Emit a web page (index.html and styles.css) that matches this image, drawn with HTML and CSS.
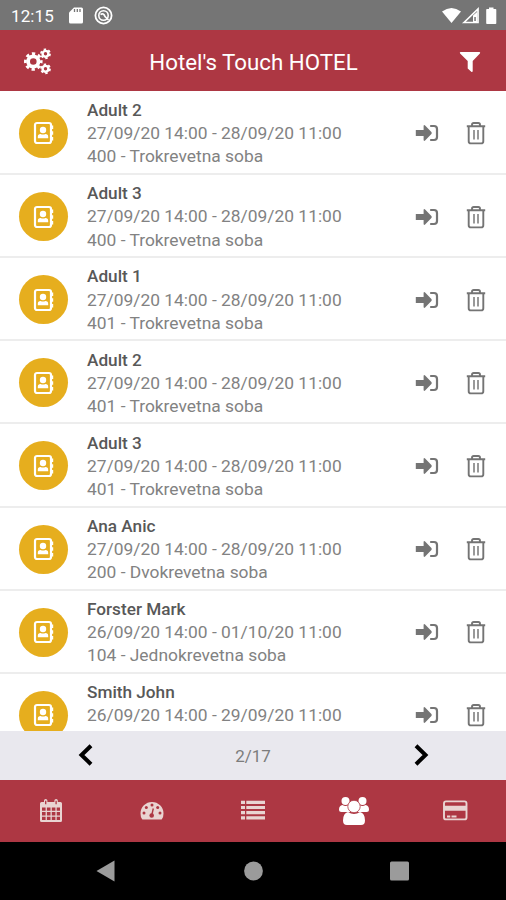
FILE: index.html
```html
<!DOCTYPE html>
<html lang="hr">

<head>
    <meta charset="UTF-8">
    <title>Hotel's Touch HOTEL</title>
    <link rel="stylesheet" href="styles.css">
</head>

<body>

    <!-- icons -->
    <svg class="sprite">
        <symbol id="book" viewBox="0 0 22 24">
            <rect x="2" y="2" width="16" height="20" rx="2" fill="none" stroke="#fff" stroke-width="2.2"/>
            <path d="M18 4.5h2.2v3.6H18zM18 10.2h2.2v3.6H18zM18 16h2.2v3.6H18z" fill="#fff"/>
            <circle cx="10" cy="9" r="3.2" fill="#fff"/>
            <path d="M4.8 17.300v-1.600q0-2.700 2.800-2.700 2.400 1.100 4.800 0 2.800 0 2.800 2.700v1.600z" fill="#fff"/>
        </symbol>
        <symbol id="checkin" viewBox="0 0 24 20">
            <path d="M.8 6.900h7.800V3.200q0-1.900 1.500-.7l6.300 6.600q.8.900 0 1.800l-6.300 6.600q-1.500 1.200-1.500-.7v-3.700H.8z" fill="#747474"/>
            <path d="M16 3h3q3 0 3 3v8q0 3-3 3h-3" fill="none" stroke="#747474" stroke-width="2.2" stroke-linecap="round"/>
        </symbol>
        <symbol id="trash" viewBox="0 0 20 24">
            <path d="M.8 5.300h18.400M6 5V3.700Q6 2 7.700 2h4.600Q14 2 14 3.700V5M2.700 5.500v14.700q0 2.200 2.200 2.200h10.200q2.200 0 2.200-2.200V5.500" fill="none" stroke="#747474" stroke-width="1.9"/>
            <path d="M8 9v9.500M12 9v9.500" stroke="#808080" stroke-width="1.600"/>
        </symbol>
    </svg>

    <div class="status">
        <span class="time">12:15</span>
        <svg class="sd" width="14" height="17" viewBox="0 0 14 17">
            <path d="M5 .5H12.500Q14 .5 14 2V15Q14 16.500 12.500 16.500H1.500Q0 16.500 0 15V5.500z" fill="#fff"/>
            <path d="M5.500 2v3M8.300 2v3M11 2v3" stroke="#757575" stroke-width="1.300"/>
        </svg>
        <svg width="19" height="19" viewBox="0 0 19 19" fill="none" stroke="#fff">
            <circle cx="9.500" cy="9.500" r="8.100" stroke-width="1.800"/>
            <circle cx="9.500" cy="9.500" r="4.700" stroke-width="1.600"/>
            <path d="M6.500 8.500q3-2 4.500 2l3.500 3.500" stroke-width="1.700"/>
        </svg>
        <svg class="signals" width="56" height="18" viewBox="0 0 56 18">
            <path d="M0 4.500Q9.500-2.500 19 4.500L9.500 16z" fill="#fff"/>
            <path d="M22 15.500L36 2v13.500z" fill="none" stroke="#fff" stroke-width="1.700"/>
            <path d="M31 8.500L35 5v10h-4z" fill="#fff"/>
            <path d="M32.300 10h1.500v4h-1.500z" fill="#757575"/>
            <path d="M45 2h2V.500h4.500V2h2q.8 0 .8.800v13.400q0 .8-.8.800h-8.500q-.8 0-.8-.8V2.800q0-.8.800-.8z" fill="#fff"/>
        </svg>
    </div>

    <div class="header">
        <svg width="28" height="28" viewBox="0 0 28 28" fill="none" stroke="#fff">
            <circle cx="9.300" cy="13.500" r="5.200" stroke-width="3.800"/>
            <circle cx="9.300" cy="13.500" r="7.900" stroke-width="2.800" stroke-dasharray="3.300 2.905" stroke-dashoffset="1.650"/>
            <circle cx="21.500" cy="5.800" r="2.900" stroke-width="2.400"/>
            <circle cx="21.500" cy="5.800" r="4.500" stroke-width="1.800" stroke-dasharray="2.400 2.312"/>
            <circle cx="21.500" cy="20.800" r="2.900" stroke-width="2.400"/>
            <circle cx="21.500" cy="20.800" r="4.500" stroke-width="1.800" stroke-dasharray="2.400 2.312"/>
        </svg>
        <h1>Hotel's Touch HOTEL</h1>
        <svg width="22" height="22" viewBox="0 0 22 22">
            <path d="M1.500 1h19q1.200.4.400 1.600L13.700 10v10.200q-.3 1.200-1.400.500l-3.600-3.300V10L1.100 2.600Q.3 1.400 1.500 1z" fill="#fff"/>
        </svg>
    </div>

    <div class="list" id="list"></div>

    <div class="pager">
        <svg width="16" height="24" viewBox="0 0 16 24"><path d="M14 1.800L4.500 11l9.500 9.200" fill="none" stroke="#000" stroke-width="4"/></svg>
        <span>2/17</span>
        <svg width="16" height="24" viewBox="0 0 16 24"><path d="M3 1.800l9.500 9.200L3 20.200" fill="none" stroke="#000" stroke-width="4"/></svg>
    </div>

    <div class="tabs">
        <!-- calendar -->
        <svg width="24" height="26" viewBox="0 0 24 26">
            <path d="M2.500 4H5V2.500Q5 1 6.700 1t1.700 1.500V4h7V2.500Q15.400 1 17.100 1t1.700 1.500V4h2.700q1.500 0 1.500 1.500v17q0 1.500-1.500 1.500h-19Q1 24 1 22.500v-17Q1 4 2.500 4z" fill="#e9d4d2"/>
            <path d="M6.700 2.800v3.500M17.100 2.800v3.500" stroke="#ad3743" stroke-width="1.300"/>
            <path d="M3 9.500h3.600v3.200H3zM7.900 9.500h3.600v3.200H7.900zM12.800 9.500h3.600v3.200h-3.600zM17.700 9.500h3.300v3.200h-3.300zM3 14h3.600v3.500H3zM7.900 14h3.600v3.500H7.900zM12.800 14h3.600v3.500h-3.600zM17.700 14h3.300v3.500h-3.300zM3 18.800h3.600V22H3zM7.900 18.800h3.600V22H7.900zM12.800 18.800h3.600V22h-3.600zM17.700 18.800h3.300V22h-3.300z" fill="#ad3743"/>
        </svg>
        <!-- dashboard -->
        <svg width="24" height="26" viewBox="0 0 24 26">
            <path d="M.5 15.500a11.500 11.500 0 0 1 23 0q0 3.300-1.500 5.500-.4.500-1 .5H3q-.6 0-1-.5Q.5 18.800.5 15.500z" fill="#e9d4d2"/>
            <g fill="#ad3743">
                <circle cx="4" cy="15" r="1.500"/><circle cx="6.300" cy="9.400" r="1.500"/><circle cx="12" cy="7" r="1.500"/>
                <circle cx="17.700" cy="9.400" r="1.500"/><circle cx="20" cy="15" r="1.500"/><circle cx="11.700" cy="17.500" r="2.300"/>
            </g>
            <path d="M11.700 17.500L13.300 10.500" stroke="#ad3743" stroke-width="1.400"/>
        </svg>
        <!-- list -->
        <svg width="24" height="26" viewBox="0 0 24 26">
            <path d="M0 2.700h4v3.200H0zM5.300 2.700H24v3.200H5.300zM0 7.900h4v3.200H0zM5.300 7.900H24v3.200H5.300zM0 13.100h4v3.200H0zM5.300 13.100H24v3.200H5.300zM0 18.200h4v3.200H0zM5.300 18.200H24v3.200H5.300z" fill="#e9d4d2"/>
        </svg>
        <!-- guests -->
        <svg width="30" height="30" viewBox="0 0 30 30" fill="#fff">
            <circle cx="6.500" cy="5" r="4"/>
            <circle cx="23.500" cy="5" r="4"/>
            <path d="M3.500 9q3 2 6 0 0 5 2.500 7H2.500Q0 16 0 13.500 0 9.500 3.500 9zM26.500 9q-3 2-6 0 0 5-2.500 7h9.500q2.500 0 2.500-2.500 0-4-3.500-4.500z"/>
            <path d="M9 16q6 4 12 0 5 1.300 5 8.500 0 4.500-4 4.500H8q-4 0-4-4.500Q4 17.300 9 16z"/>
            <circle cx="15" cy="10.500" r="6.200" stroke="#ad3743" stroke-width=".8"/>
        </svg>
        <!-- card -->
        <svg width="26" height="26" viewBox="0 0 26 26">
            <rect x="2" y="3.400" width="22.500" height="18" rx="2" fill="none" stroke="#e9d4d2" stroke-width="1.900"/>
            <path d="M2 7.700h22.500v5H2zM5 17.500h3.300v2H5zM9.500 17.500h5v2h-5z" fill="#e9d4d2"/>
        </svg>
    </div>

    <div class="navbar">
        <svg width="20" height="22" viewBox="0 0 20 22"><path d="M18.500.500v21L.5 11z" fill="#9b9b9b"/></svg>
        <svg width="20" height="20" viewBox="0 0 20 20"><circle cx="10.500" cy="10" r="9.400" fill="#9b9b9b"/></svg>
        <svg width="20" height="20" viewBox="0 0 20 20"><rect x="0" y=".5" width="19" height="19" rx="1.500" fill="#9b9b9b"/></svg>
    </div>

    <script src="script.js"></script>

</body>

</html>
```
FILE: styles.css
```css
body {
    margin: 0;
    width: 506px;
    height: 900px;
    display: flex;
    flex-direction: column;
    overflow: hidden;
    background-color: #fff;
    font-family: Roboto, sans-serif;
}

svg {
    display: block;
    flex: none;
}

.sprite {
    display: none;
}

.status {
    height: 30px;
    flex: none;
    display: flex;
    align-items: center;
    padding: 1px 8px 0 11px;
    box-sizing: border-box;
    background-color: #757575;
    color: #fff;
}

.time {
    width: 58px;
    font-size: 17px;
    letter-spacing: 0.1px;
}

.sd {
    margin-right: 11px;
}

.signals {
    margin-left: auto;
}

.header {
    height: 61px;
    flex: none;
    display: flex;
    align-items: center;
    justify-content: space-between;
    padding: 2px 25px 0 24px;
    box-sizing: border-box;
    background-color: #ad3743;
    color: #fff;
}

.header h1 {
    margin: 0 4px 0 0;
    font-size: 22.3px;
    font-weight: 400;
}

.list {
    flex: 1;
    min-height: 0;
    overflow: hidden;
}

.row {
    height: 83.15px;
    display: flex;
    align-items: center;
    padding: 2px 20px 0 19px;
    box-sizing: border-box;
    border-bottom: 2px solid #ededed;
}

.row:first-child {
    height: 84px;
}

.avatar {
    width: 49px;
    height: 49px;
    margin-right: 19px;
    display: flex;
    align-items: center;
    justify-content: center;
    border-radius: 50%;
    background-color: #e6ae1e;
}

.info {
    flex: 1;
    padding-top: 1px;
    font-size: 17.4px;
    line-height: 23.2px;
    color: #828282;
    white-space: nowrap;
}

.name {
    font-size: 17.2px;
    font-weight: 500;
    color: #585858;
}

.checkin {
    margin-right: 27px;
}

.pager {
    height: 49px;
    flex: none;
    display: flex;
    align-items: center;
    justify-content: space-between;
    padding: 0 77px;
    box-sizing: border-box;
    background-color: #e9e8ee;
    color: #7c7c7c;
    font-size: 17px;
}

.tabs {
    height: 62px;
    flex: none;
    display: grid;
    grid-template-columns: repeat(5, 1fr);
    align-items: center;
    justify-items: center;
    background-color: #ad3743;
}

.navbar {
    height: 58px;
    flex: none;
    display: flex;
    align-items: center;
    justify-content: space-between;
    padding: 0 96px;
    box-sizing: border-box;
    background-color: #000;
}
```
FILE: script.js
```js
const guests = [
    ["Adult 2", "27/09/20 14:00 - 28/09/20 11:00", "400 - Trokrevetna soba"],
    ["Adult 3", "27/09/20 14:00 - 28/09/20 11:00", "400 - Trokrevetna soba"],
    ["Adult 1", "27/09/20 14:00 - 28/09/20 11:00", "401 - Trokrevetna soba"],
    ["Adult 2", "27/09/20 14:00 - 28/09/20 11:00", "401 - Trokrevetna soba"],
    ["Adult 3", "27/09/20 14:00 - 28/09/20 11:00", "401 - Trokrevetna soba"],
    ["Ana Anic", "27/09/20 14:00 - 28/09/20 11:00", "200 - Dvokrevetna soba"],
    ["Forster Mark", "26/09/20 14:00 - 01/10/20 11:00", "104 - Jednokrevetna soba"],
    ["Smith John", "26/09/20 14:00 - 29/09/20 11:00", ""]
];

document.getElementById('list').innerHTML = guests.map(([name, dates, room]) => `
    <div class="row">
        <div class="avatar"><svg width="22" height="24"><use href="#book"/></svg></div>
        <div class="info">
            <div class="name">${name}</div>
            <div>${dates}</div>
            <div>${room || '&nbsp;'}</div>
        </div>
        <svg class="checkin" width="24" height="20"><use href="#checkin"/></svg>
        <svg width="20" height="24"><use href="#trash"/></svg>
    </div>`).join('');
```
